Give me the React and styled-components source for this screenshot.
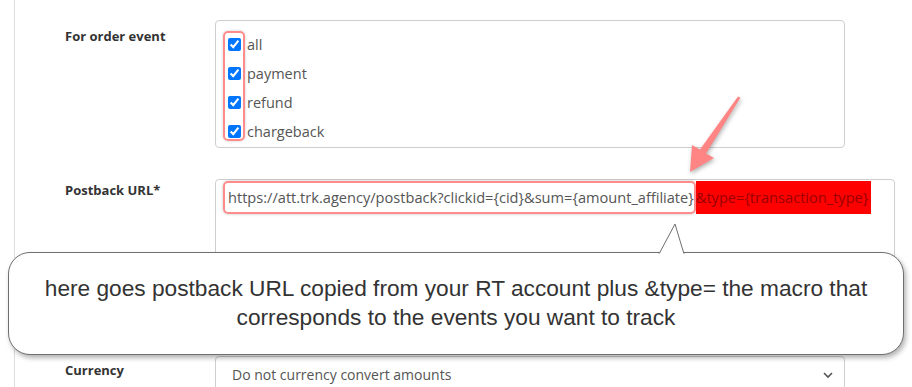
import React from "react";
import styled, { createGlobalStyle } from "styled-components";

const GlobalStyle = createGlobalStyle`
  html, body {
    margin: 0;
    padding: 0;
    background: #fff;
    overflow: hidden;
  }
  body {
    font-family: "Open Sans", "Noto Sans", sans-serif;
  }
`;

const Page = styled.div`
  position: relative;
  width: 912px;
  height: 387px;
  overflow: hidden;
`;

const Card = styled.div`
  margin-left: 14px;
  border-left: 1px solid #dcdcdc;
  padding: 20px 0 0 50px;
  height: 100%;
  box-sizing: border-box;
`;

const Row = styled.div`
  display: grid;
  grid-template-columns: 150px ${(p) => (p.$wide ? "680px" : "630px")};
  margin-bottom: 31px;
`;

const Label = styled.div`
  font-size: 13px;
  font-weight: 700;
  color: #333;
  line-height: 18px;
  padding-top: ${(p) => p.$offset}px;
`;

const Box = styled.div`
  border: 1px solid #cfcfcf;
  border-radius: 4px;
  box-sizing: border-box;
  height: ${(p) => p.$height}px;
  position: relative;
`;

const CheckList = styled.div`
  padding: 9px 0 0 12px;
  position: relative;
`;

const CheckHighlight = styled.div`
  position: absolute;
  left: 7px;
  top: 10px;
  width: 22px;
  height: 110px;
  border: 2px solid #ff8c8c;
  border-radius: 5px;
  box-sizing: border-box;
  box-shadow: 0 0 3px rgba(0, 0, 0, 0.2);
`;

const CheckItem = styled.label`
  display: flex;
  align-items: center;
  gap: 6px;
  height: 29px;
  font-size: 14.5px;
  color: #555;
`;

const Check = styled.input`
  margin: 0;
  width: 13px;
  height: 13px;
  accent-color: #0075ff;
`;

const UrlLine = styled.div`
  display: flex;
  margin: 1px 0 0 7px;
  font-size: 14.6px;
  line-height: 29px;
  white-space: nowrap;
`;

const UrlMark = styled.span`
  border: 2px solid #ff8c8c;
  border-radius: 5px;
  padding: 0 0 0 3px;
  color: #555;
  box-shadow: 0 0 3px rgba(0, 0, 0, 0.25);
`;

const UrlAdd = styled.span`
  background: #ff0000;
  color: #9a0000;
  padding: 2px 3px 2px 0;
`;

const SelectText = styled.div`
  display: flex;
  align-items: center;
  justify-content: space-between;
  padding: 8px 10px 0 16px;
  font-size: 14px;
  color: #555;
  line-height: 20px;
`;

const Arrow = styled.svg`
  position: absolute;
  left: 0;
  top: 0;
  filter: drop-shadow(1px 2px 2px rgba(0, 0, 0, 0.3));
`;

const Balloon = styled.div`
  position: absolute;
  left: 8px;
  top: 252px;
  width: 896px;
  height: 103px;
  box-sizing: border-box;
  border: 1px solid #6f6f6f;
  border-radius: 22px;
  background: #fff;
  box-shadow: 2px 3px 5px rgba(0, 0, 0, 0.3);
  padding-top: 21px;
  text-align: center;
  font-family: "Liberation Sans", Arial, sans-serif;
  font-size: 22.7px;
  line-height: 29px;
  color: #333;
`;

const Tail = styled.svg`
  position: absolute;
  left: 648px;
  top: -30px;
`;

export default function App() {
  const events = ["all", "payment", "refund", "chargeback"];
  return (
    <>
      <GlobalStyle />
      <Page>
        <Card>
          <Row>
            <Label $offset={7}>For order event</Label>
            <Box $height={128}>
              <CheckList>
                <CheckHighlight />
                {events.map((e) => (
                  <CheckItem key={e}>
                    <Check type="checkbox" checked readOnly />
                    {e}
                  </CheckItem>
                ))}
              </CheckList>
            </Box>
          </Row>
          <Row $wide>
            <Label $offset={2}>Postback URL*</Label>
            <Box $height={146}>
              <UrlLine>
                <UrlMark>
                  https://att.trk.agency/postback?clickid={"{cid}"}&amp;sum={"{amount_affiliate}"}
                </UrlMark>
                <UrlAdd>&amp;type={"{transaction_type}"}</UrlAdd>
              </UrlLine>
            </Box>
          </Row>
          <Row>
            <Label $offset={5}>Currency</Label>
            <Box $height={60}>
              <SelectText>
                Do not currency convert amounts
                <svg width="12" height="8" viewBox="0 0 12 8">
                  <path d="M2 2 L6 6 L10 2" fill="none" stroke="#555" strokeWidth="1.6" />
                </svg>
              </SelectText>
            </Box>
          </Row>
        </Card>

        <Arrow width="912" height="387" viewBox="0 0 912 387">
          <polygon
            points="738,96.4 740.4,97.8 706,153.4 714,158 690,172 692,145 700,149.6"
            fill="#ff8585"
          />
        </Arrow>

        <Balloon>
          <Tail width="32" height="32" viewBox="0 0 32 32">
            <path d="M2 31 L18 1 L27 31" fill="#fff" stroke="#6f6f6f" strokeWidth="1" />
            <rect x="2.5" y="30" width="24" height="3" fill="#fff" />
          </Tail>
          here goes postback URL copied from your RT account plus &amp;type= the macro that
          <br />
          corresponds to the events you want to track
        </Balloon>
      </Page>
    </>
  );
}
